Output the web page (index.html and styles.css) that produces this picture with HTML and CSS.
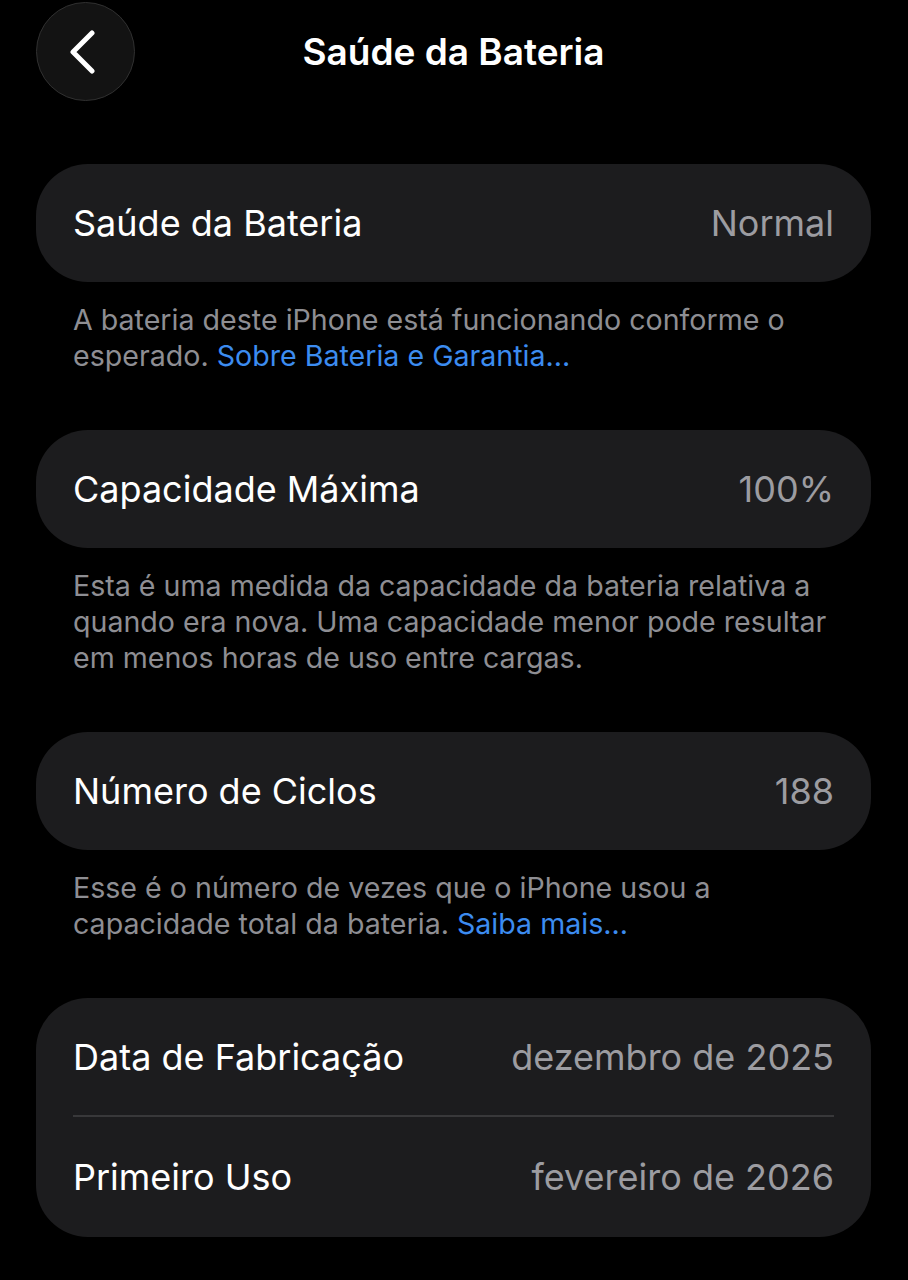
FILE: index.html
```html
<!DOCTYPE html>
<html lang="pt-BR">
<head>
<meta charset="utf-8">
<title>Saúde da Bateria</title>
<link rel="stylesheet" href="styles.css">
</head>
<body>
<div class="page">
  <header class="nav">
    <button class="back" aria-label="Voltar">
      <svg width="30" height="44" viewBox="0 0 30 44"><path d="M25 3 L6 22 L25 41" fill="none" stroke="#fff" stroke-width="5" stroke-linecap="round" stroke-linejoin="round"/></svg>
    </button>
    <h1 class="title">Saúde da Bateria</h1>
  </header>

  <section class="group">
    <div class="card">
      <div class="row"><span class="label">Saúde da Bateria</span><span class="value">Normal</span></div>
    </div>
    <p class="note">A bateria deste iPhone está funcionando conforme o esperado. <span class="link">Sobre Bateria e Garantia...</span></p>
  </section>

  <section class="group">
    <div class="card">
      <div class="row"><span class="label">Capacidade Máxima</span><span class="value">100%</span></div>
    </div>
    <p class="note">Esta é uma medida da capacidade da bateria relativa a quando era nova. Uma capacidade menor pode resultar em menos horas de uso entre cargas.</p>
  </section>

  <section class="group">
    <div class="card">
      <div class="row"><span class="label">Número de Ciclos</span><span class="value">188</span></div>
    </div>
    <p class="note">Esse é o número de vezes que o iPhone usou a capacidade total da bateria. <span class="link">Saiba mais...</span></p>
  </section>

  <section class="group">
    <div class="card">
      <div class="row"><span class="label">Data de Fabricação</span><span class="value">dezembro de 2025</span></div>
      <div class="divider"></div>
      <div class="row"><span class="label">Primeiro Uso</span><span class="value">fevereiro de 2026</span></div>
    </div>
  </section>
</div>
</body>
</html>
```

FILE: styles.css
```css
html, body {
  margin: 0;
  padding: 0;
  background: #000;
}
body {
  font-family: Inter, "Noto Sans", "Liberation Sans", sans-serif;
  color: #fff;
  -webkit-font-smoothing: antialiased;
}
.page {
  padding: 2px 37px 0 36px;
}
.nav {
  position: relative;
  height: 162px;
}
.back {
  width: 99px;
  height: 99px;
  border-radius: 50%;
  background: #131313;
  border: 1.5px solid #303030;
  display: flex;
  align-items: center;
  justify-content: center;
  padding: 0 8px 0 0;
  margin: 0;
  cursor: pointer;
}
.back svg {
  display: block;
}
.title {
  position: absolute;
  left: 0;
  right: 0;
  top: 0;
  margin: 0;
  height: 99px;
  line-height: 99px;
  text-align: center;
  font-size: 37px;
  font-weight: 600;
  color: #fff;
  pointer-events: none;
}
.group {
  padding-bottom: 56px;
}
.card {
  background: #1c1c1e;
  border-radius: 52px;
  padding: 0 37px;
}
.row {
  height: 118px;
  display: flex;
  align-items: center;
  justify-content: space-between;
  font-size: 36px;
}
.label {
  color: #fff;
}
.value {
  color: #9c9ca1;
}
.divider {
  height: 2px;
  background: #38383a;
}
.card .row + .divider + .row {
  height: 120px;
}
.card .row:first-child:not(:only-child) {
  height: 117px;
}
.note {
  margin: 0;
  padding: 20px 30px 0 37px;
  font-size: 28.6px;
  line-height: 36px;
  color: #8e8e93;
}
.link {
  color: #3c8cf0;
}
```
